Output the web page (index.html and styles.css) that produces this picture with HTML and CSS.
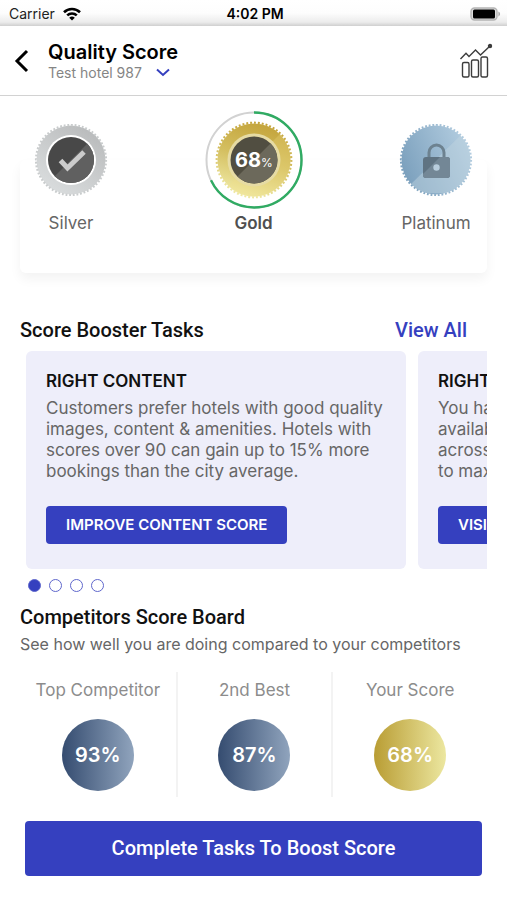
FILE: index.html
```html
<!DOCTYPE html>
<html lang="en">
<head>
<meta charset="utf-8">
<meta name="viewport" content="width=device-width, initial-scale=1">
<title>Quality Score</title>
<link rel="stylesheet" href="styles.css">
</head>
<body>
<div class="status">
  <div class="status-left">
    <span>Carrier</span>
    <svg width="18" height="14" viewBox="0 0 18 14" aria-hidden="true" fill="none" stroke="#000" stroke-width="2.6">
      <path d="M1 5.2a11.5 11.5 0 0 1 16 0"/>
      <path d="M4.2 8.4a7 7 0 0 1 9.6 0"/>
      <path d="M9 13.6 6.2 10.8a4 4 0 0 1 5.6 0z" fill="#000" stroke="none"/>
    </svg>
  </div>
  <span class="status-time">4:02 PM</span>
  <div class="status-right">
    <svg width="31" height="14" viewBox="0 0 31 14" aria-hidden="true">
      <rect x="1" y="1" width="26" height="12" rx="3.5" fill="#ddd" stroke="#b4b4b4" stroke-width="1.4"/>
      <rect x="3" y="2.6" width="22" height="8.8" rx="1.5" fill="#000"/>
      <path d="M28.4 4.6c2.2.8 2.2 4 0 4.8z" fill="#aaa"/>
    </svg>
  </div>
</div>

<header class="header">
  <button class="icon-button" type="button" aria-label="Back">
    <svg width="16" height="24" viewBox="0 0 16 24" fill="none" stroke="#000" stroke-width="3"><path d="M13 2 3 12l10 10"/></svg>
  </button>
  <div class="header-text">
    <h1>Quality Score</h1>
    <button class="hotel" type="button">Test hotel 987
      <svg width="14" height="9" viewBox="0 0 14 9" aria-hidden="true" fill="none" stroke="#3540bf" stroke-width="2"><path d="M1 1.5 7 7l6-5.5"/></svg>
    </button>
  </div>
  <button class="icon-button" type="button" aria-label="Analytics">
    <svg width="34" height="36" viewBox="0 0 34 36" fill="none" stroke="#3c3c3c" stroke-width="1.4">
      <rect x="3.5" y="19.5" width="6.5" height="14.5" rx="1.5"/>
      <rect x="12.5" y="17" width="7" height="17" rx="1.5"/>
      <rect x="22" y="14" width="6.5" height="20" rx="1.5"/>
      <path d="M1.5 16 7 10.300l3 3.200L16.500 7l5 5L31 3"/>
      <circle cx="31" cy="3" r="1.500" fill="#3c3c3c"/>
    </svg>
  </button>
</header>

<main>
  <section class="levels" aria-label="Levels">
    <ul class="level-list">
      <li>
        <svg class="badge" width="98" height="98" viewBox="0 0 98 98" aria-hidden="true">
          <defs>
            <linearGradient id="silver" x1="1" y1="0" x2="0.300" y2="1"><stop offset="0" stop-color="#b3b5b6"/><stop offset="0.300" stop-color="#c0c2c3"/><stop offset="1" stop-color="#d9dcdd"/></linearGradient>
            <clipPath id="silver-clip"><circle cx="49" cy="49" r="23"/></clipPath>
          </defs>
          <circle cx="49" cy="49" r="34.500" fill="url(#silver)"/>
          <circle cx="49" cy="49" r="35" fill="none" stroke="#c9cccd" stroke-width="2.200" pathLength="120" stroke-dasharray="1 1"/>
          <circle cx="49" cy="49" r="25" fill="#fff"/>
          <g clip-path="url(#silver-clip)">
            <rect x="26" y="26" width="46" height="46" fill="#484848"/>
            <path d="M72 26v46H26z" fill="#606060"/>
          </g>
          <path d="m38.500 49.500 7 7.500L62 41" fill="none" stroke="#ccc" stroke-width="5"/>
        </svg>
        <span>Silver</span>
      </li>
      <li class="current">
        <svg class="badge" width="98" height="98" viewBox="0 0 98 98" role="img" aria-label="68%">
          <defs>
            <linearGradient id="gold" x1="0.700" y1="0" x2="0.400" y2="1"><stop offset="0" stop-color="#c3a33a"/><stop offset="0.500" stop-color="#d4bf60"/><stop offset="1" stop-color="#efe9a4"/></linearGradient>
            <clipPath id="gold-clip"><circle cx="49" cy="49" r="23.500"/></clipPath>
            <clipPath id="gold-disc"><circle cx="49" cy="49" r="37"/></clipPath>
          </defs>
          <circle cx="49" cy="49" r="47.500" fill="none" stroke="#d2d2d2" stroke-width="2"/>
          <circle cx="49" cy="49" r="47.500" fill="none" stroke="#30ab63" stroke-width="2.400" pathLength="100" stroke-dasharray="68 32" transform="rotate(-90 49 49)"/>
          <circle cx="49" cy="49" r="36.500" fill="url(#gold)"/>
          <path d="M76 22a37 37 0 0 1-54 54z" fill="#f3df87" fill-opacity="0.250" clip-path="url(#gold-disc)"/>
          <circle cx="49" cy="49" r="37.300" fill="none" stroke="url(#gold)" stroke-width="2.200" pathLength="120" stroke-dasharray="1 1"/>
          <circle cx="49" cy="49" r="26.500" fill="#e6dba4"/>
          <g clip-path="url(#gold-clip)">
            <rect x="25" y="25" width="48" height="48" fill="#514e41"/>
            <path d="M73 25v48H25z" fill="#6c695b"/>
          </g>
          <text class="badge-score" x="30" y="56">68<tspan class="badge-unit">%</tspan></text>
        </svg>
        <span>Gold</span>
      </li>
      <li>
        <svg class="badge" width="98" height="98" viewBox="0 0 98 98" aria-hidden="true">
          <defs>
            <linearGradient id="plat" x1="0" y1="0.700" x2="1" y2="0.300"><stop offset="0" stop-color="#7a9fbc"/><stop offset="1" stop-color="#b3cde0"/></linearGradient>
            <clipPath id="plat-clip"><circle cx="49" cy="49" r="34.500"/></clipPath>
            <clipPath id="lock-clip"><rect x="36" y="46" width="27" height="21" rx="3"/></clipPath>
          </defs>
          <circle cx="49" cy="49" r="34.500" fill="url(#plat)"/>
          <circle cx="49" cy="49" r="35" fill="none" stroke="url(#plat)" stroke-width="2.200" pathLength="120" stroke-dasharray="1 1"/>
          <path d="M76 22h10v60H22v-7z" fill="#c2d4e0" fill-opacity="0.450" clip-path="url(#plat-clip)"/>
          <path d="M42 47v-5.500a7.500 7.500 0 0 1 15 0V47" fill="none" stroke="#6d8290" stroke-width="3"/>
          <g clip-path="url(#lock-clip)">
            <rect x="36" y="46" width="27" height="21" fill="#5f7382"/>
            <path d="M53 46h10v21H36v-4z" fill="#738796"/>
          </g>
          <circle cx="49.500" cy="56.500" r="3.200" fill="#b8cddd"/>
        </svg>
        <span>Platinum</span>
      </li>
    </ul>
  </section>

  <section class="tasks">
    <div class="section-head">
      <h2>Score Booster Tasks</h2>
      <a href="#tasks">View All</a>
    </div>
    <div class="carousel" id="tasks">
      <article class="task">
        <h3>RIGHT CONTENT</h3>
        <p>Customers prefer hotels with good quality<br>images, content &amp; amenities. Hotels with<br>scores over 90 can gain up to 15% more<br>bookings than the city average.</p>
        <button class="task-button" type="button">IMPROVE CONTENT SCORE</button>
      </article>
      <article class="task">
        <h3>RIGHT AVAILABILITY</h3>
        <p>You have rooms to sell. Keep your<br>availability open for more dates<br>across all of your room types<br>to maximise your bookings.</p>
        <button class="task-button" type="button">VISIT INVENTORY</button>
      </article>
    </div>
    <div class="dots">
      <button class="dot active" type="button" aria-label="Task 1"></button>
      <button class="dot" type="button" aria-label="Task 2"></button>
      <button class="dot" type="button" aria-label="Task 3"></button>
      <button class="dot" type="button" aria-label="Task 4"></button>
    </div>
  </section>

  <section class="board">
    <h2>Competitors Score Board</h2>
    <p>See how well you are doing compared to your competitors</p>
    <ul class="board-list">
      <li><span>Top Competitor</span><strong class="score">93%</strong></li>
      <li><span>2nd Best</span><strong class="score">87%</strong></li>
      <li><span>Your Score</span><strong class="score own">68%</strong></li>
    </ul>
  </section>
</main>

<footer class="footer">
  <button class="cta" type="button">Complete Tasks To Boost Score</button>
</footer>
</body>
</html>
```
FILE: styles.css
```css
* { box-sizing: border-box; }

body {
  margin: 0;
  background: #fff;
  color: #111;
  font-family: Inter, "Liberation Sans", sans-serif;
  font-size: 17px;
}

h1, h2, h3, p, ul { margin: 0; padding: 0; }
ul { list-style: none; }
button { margin: 0; padding: 0; border: 0; background: none; font: inherit; color: inherit; cursor: pointer; }
svg { display: block; flex: none; }

.status {
  display: grid;
  grid-template-columns: 1fr auto 1fr;
  align-items: center;
  height: 26px;
  padding: 1px 6px 0 9px;
  background: linear-gradient(#fff 0, #fdfdfd 50%, #ececec 85%, #cfcfcf 100%);
  font-size: 14px;
  color: #222;
}
.status-left { display: flex; align-items: center; gap: 8px; }
.status-time { font-weight: 600; color: #000; }
.status-right { display: flex; justify-content: flex-end; }

.header {
  display: flex;
  align-items: center;
  height: 70px;
  padding: 0 14px;
  border-bottom: 1px solid #d2d2d2;
}
.header-text { flex: 1; padding: 0 18px; }
.header h1 { font-size: 20px; line-height: 24px; font-weight: 600; color: #000; }
.hotel { display: flex; align-items: center; gap: 14px; font-size: 14px; line-height: 18px; color: #858585; }

.levels {
  margin: 64px 20px 0;
  border-radius: 6px;
  box-shadow: 0 6px 12px rgba(0, 0, 0, 0.05);
}
.level-list {
  display: flex;
  justify-content: space-between;
  padding: 0 2px 36px;
}
.level-list li {
  display: flex;
  flex-direction: column;
  align-items: center;
  width: 98px;
  margin-top: -49px;
  line-height: 28px;
  color: #666;
}
.level-list .current { font-weight: 600; color: #505050; }
.badge-score { font-size: 20px; font-weight: 700; fill: #fff; }
.badge-unit { font-size: 12px; font-weight: 400; }

h2 { font-family: Roboto, sans-serif; font-size: 20px; line-height: 24px; font-weight: 500; }

.tasks { margin-top: 45px; padding: 0 20px; }
.section-head { display: flex; justify-content: space-between; padding-right: 20px; }
.section-head a {
  font-family: Roboto, sans-serif;
  font-size: 20px;
  line-height: 24px;
  font-weight: 500;
  color: #3540bf;
  text-decoration: none;
}
.carousel { display: flex; gap: 12px; margin: 9px 0 0 6px; overflow: hidden; }
.task {
  flex: 0 0 calc(100% - 81px);
  padding: 20px 20px 25px;
  border-radius: 6px;
  background: #eeeefa;
  white-space: nowrap;
}
.task h3 { font-size: 17px; line-height: 20px; font-weight: 600; }
.task p { margin-top: 7px; line-height: 21px; color: #666; }
.task-button {
  margin-top: 24px;
  padding: 0 20px;
  border-radius: 4px;
  background: #3540bf;
  color: #fff;
  font-size: 15px;
  line-height: 38px;
  font-weight: 600;
}
.dots { display: flex; gap: 8px; margin: 10px 0 0 8px; }
.dot { width: 13px; height: 13px; border: 1px solid #5f67cc; border-radius: 50%; }
.dot.active { background: #3540bf; }

.board { margin-top: 13px; padding: 0 20px; }
.board p { margin-top: 4px; line-height: 22px; color: #666; }
.board > p { font-size: 16px; }
.board-list { display: grid; grid-template-columns: repeat(3, 1fr); margin-top: 17px; }
.board-list li {
  display: flex;
  flex-direction: column;
  align-items: center;
  gap: 18px;
  padding: 7px 0 6px;
  line-height: 22px;
  color: #8c8c8c;
}
.board-list li + li { border-left: 2px solid #f3f3f3; }
.score {
  width: 72px;
  height: 72px;
  border-radius: 50%;
  background: linear-gradient(90deg, #354c70, #90a4bd);
  color: #fff;
  font-size: 20px;
  line-height: 72px;
  font-weight: 600;
  text-align: center;
}
.score.own { background: linear-gradient(90deg, #b99d34, #ece7a0); }

.footer { padding: 24px 25px; }
.cta {
  width: 100%;
  border-radius: 4px;
  background: #3540bf;
  color: #fff;
  font-family: Roboto, sans-serif;
  font-size: 20px;
  line-height: 55px;
  font-weight: 500;
}
```
